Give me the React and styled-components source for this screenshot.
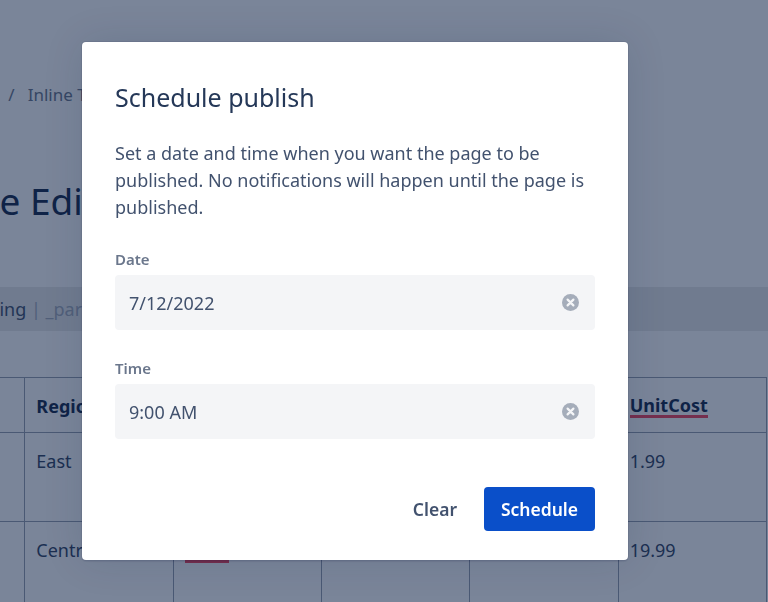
import React from "react";
import styled, { createGlobalStyle } from "styled-components";

const Global = createGlobalStyle`
  html, body {
    margin: 0;
    padding: 0;
    background: #fff;
    overflow: hidden;
  }
  * { box-sizing: border-box; }
  body {
    font-family: "Noto Sans", "Open Sans", sans-serif;
    color: #172b4d;
  }
`;

const Page = styled.div`
  width: 768px;
  height: 602px;
  overflow: hidden;
`;

const Content = styled.main`
  width: 1100px;
  margin-left: -124px;
  display: flex;
  flex-direction: column;
`;

const Breadcrumb = styled.nav`
  height: 24px;
  margin: 83px 0 0 -5px;
  display: flex;
  gap: 13px;
  font-size: 17px;
  line-height: 24px;
  color: #6b778c;
  white-space: nowrap;
`;

const PageTitle = styled.h1`
  margin: 70px 0 0 -55px;
  font-size: 37px;
  line-height: 48px;
  font-weight: 400;
  white-space: nowrap;
`;

const Strip = styled.div`
  height: 44px;
  margin-top: 62px;
  padding-left: 42px;
  background: #e9eaea;
  display: flex;
  align-items: center;
  font-size: 18px;
  color: #42526e;
  white-space: pre;
`;

const Muted = styled.span`
  color: #a5adba;
`;

const Table = styled.table`
  margin-top: 46px;
  border-collapse: collapse;
  table-layout: fixed;
  width: 891px;
  font-size: 18px;
  line-height: 24px;
`;

const Head = styled.th`
  height: 55px;
  padding: 1px 11px 0;
  border: 1px solid #97a0af;
  font-weight: 700;
  text-align: left;
  vertical-align: middle;
  white-space: nowrap;
`;

const Cell = styled.td`
  height: 89px;
  padding: 16px 11px 0;
  border: 1px solid #97a0af;
  color: #344563;
  vertical-align: top;
  white-space: nowrap;
`;

const Misspelled = styled.span`
  display: inline-block;
  line-height: 20px;
  border-bottom: 3px solid #f5455c;
`;

const Overlay = styled.div`
  position: fixed;
  inset: 0;
  background: rgba(9, 30, 66, 0.54);
`;

const Dialog = styled.section`
  position: absolute;
  left: 82px;
  top: 42px;
  width: 546px;
  height: 518px;
  padding: 31px 33px 29px;
  background: #fff;
  border-radius: 4px;
  box-shadow: 0 0 0 1px rgba(9, 30, 66, 0.08), 0 2px 1px rgba(9, 30, 66, 0.08),
    0 0 40px rgba(9, 30, 66, 0.12);
  display: flex;
  flex-direction: column;
`;

const DialogTitle = styled.h2`
  margin: 0;
  font-size: 25px;
  line-height: 48px;
  font-weight: 400;
  color: #253858;
`;

const Description = styled.p`
  margin: 19px 0 0;
  font-size: 18px;
  line-height: 27px;
  color: #42526e;
`;

const Field = styled.div`
  margin-top: ${(p) => p.$gap}px;
  display: flex;
  flex-direction: column;
`;

const Label = styled.label`
  font-size: 15px;
  line-height: 20px;
  font-weight: 600;
  color: #6b778c;
  margin-bottom: 6px;
`;

const InputBox = styled.div`
  height: 55px;
  padding: 0 16px 0 14px;
  background: #f4f5f7;
  border-radius: 4px;
  display: flex;
  align-items: center;
  justify-content: space-between;
  font-size: 18px;
  color: #42526e;
`;

const Footer = styled.footer`
  margin-top: auto;
  display: flex;
  justify-content: flex-end;
  align-items: center;
  gap: 27px;
`;

const TextButton = styled.button`
  padding: 0;
  border: 0;
  background: none;
  font: inherit;
  font-size: 17.5px;
  font-weight: 600;
  color: #42526e;
`;

const PrimaryButton = styled.button`
  width: 111px;
  height: 44px;
  padding: 0;
  border: 0;
  border-radius: 4px;
  background: #0a4fc9;
  font: inherit;
  font-size: 17.5px;
  font-weight: 600;
  color: #fff;
`;

function ClearIcon() {
  return (
    <svg width="17" height="17" viewBox="0 0 17 17" aria-hidden="true">
      <circle cx="8.5" cy="8.5" r="8.5" fill="#a5adba" />
      <path d="M5.6 5.6l5.8 5.8M11.4 5.6l-5.8 5.8" stroke="#f4f5f7" strokeWidth="2.2" strokeLinecap="round" />
    </svg>
  );
}

const columns = ["OrderDate", "Region", "Rep", "Item", "Units", "UnitCost"];

export default function App() {
  return (
    <Page>
      <Global />
      <Content>
        <Breadcrumb>
          <span>Documentation</span>
          <span>/</span>
          <span>Inline Table Editing</span>
        </Breadcrumb>
        <PageTitle>Inline Table Editing</PageTitle>
        <Strip>
          Table Editing<Muted> | _parent</Muted>
        </Strip>
        <Table>
          <thead>
            <tr>
              {columns.map((c) => (
                <Head key={c}>{c === "UnitCost" ? <Misspelled>{c}</Misspelled> : c}</Head>
              ))}
            </tr>
          </thead>
          <tbody>
            <tr>
              <Cell>1/6/2019</Cell>
              <Cell>East</Cell>
              <Cell>Jones</Cell>
              <Cell>Pencil</Cell>
              <Cell>95</Cell>
              <Cell>1.99</Cell>
            </tr>
            <tr>
              <Cell>1/23/2019</Cell>
              <Cell>Central</Cell>
              <Cell>
                <Misspelled>Kivell</Misspelled>
              </Cell>
              <Cell>Binder</Cell>
              <Cell>50</Cell>
              <Cell>19.99</Cell>
            </tr>
          </tbody>
        </Table>
      </Content>
      <Overlay />
      <Dialog>
        <DialogTitle>Schedule publish</DialogTitle>
        <Description>
          Set a date and time when you want the page to be published. No notifications will happen until the page is
          published.
        </Description>
        <Field $gap={28}>
          <Label>Date</Label>
          <InputBox>
            7/12/2022
            <ClearIcon />
          </InputBox>
        </Field>
        <Field $gap={28}>
          <Label>Time</Label>
          <InputBox>
            9:00 AM
            <ClearIcon />
          </InputBox>
        </Field>
        <Footer>
          <TextButton>Clear</TextButton>
          <PrimaryButton>Schedule</PrimaryButton>
        </Footer>
      </Dialog>
    </Page>
  );
}
